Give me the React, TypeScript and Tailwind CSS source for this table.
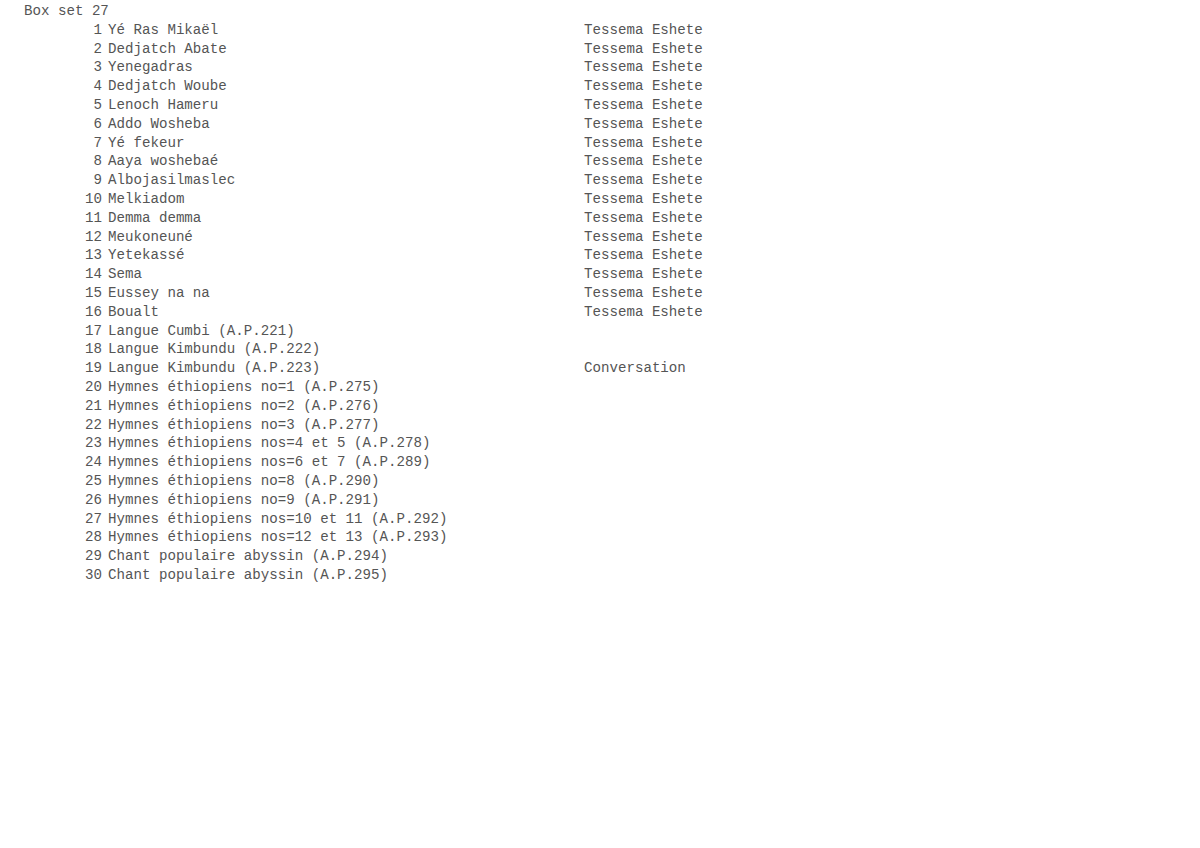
const tracks: [string, string][] = [
  ['Yé Ras Mikaël', 'Tessema Eshete'],
  ['Dedjatch Abate', 'Tessema Eshete'],
  ['Yenegadras', 'Tessema Eshete'],
  ['Dedjatch Woube', 'Tessema Eshete'],
  ['Lenoch Hameru', 'Tessema Eshete'],
  ['Addo Wosheba', 'Tessema Eshete'],
  ['Yé fekeur', 'Tessema Eshete'],
  ['Aaya woshebaé', 'Tessema Eshete'],
  ['Albojasilmaslec', 'Tessema Eshete'],
  ['Melkiadom', 'Tessema Eshete'],
  ['Demma demma', 'Tessema Eshete'],
  ['Meukoneuné', 'Tessema Eshete'],
  ['Yetekassé', 'Tessema Eshete'],
  ['Sema', 'Tessema Eshete'],
  ['Eussey na na', 'Tessema Eshete'],
  ['Boualt', 'Tessema Eshete'],
  ['Langue Cumbi (A.P.221)', ''],
  ['Langue Kimbundu (A.P.222)', ''],
  ['Langue Kimbundu (A.P.223)', 'Conversation'],
  ['Hymnes éthiopiens no=1 (A.P.275)', ''],
  ['Hymnes éthiopiens no=2 (A.P.276)', ''],
  ['Hymnes éthiopiens no=3 (A.P.277)', ''],
  ['Hymnes éthiopiens nos=4 et 5 (A.P.278)', ''],
  ['Hymnes éthiopiens nos=6 et 7 (A.P.289)', ''],
  ['Hymnes éthiopiens no=8 (A.P.290)', ''],
  ['Hymnes éthiopiens no=9 (A.P.291)', ''],
  ['Hymnes éthiopiens nos=10 et 11 (A.P.292)', ''],
  ['Hymnes éthiopiens nos=12 et 13 (A.P.293)', ''],
  ['Chant populaire abyssin (A.P.294)', ''],
  ['Chant populaire abyssin (A.P.295)', ''],
];

export default function App() {
  return (
    <div className="min-h-screen bg-white pl-[24px] pt-[2px] font-['Liberation_Mono',monospace] text-[14.15px] leading-[18.8px] text-[#555]">
      <div className="whitespace-pre">Box set 27</div>
      {tracks.map(([title, artist], i) => (
        <div key={i} className="flex whitespace-pre">
          <span className="w-[78px] shrink-0 text-right">{i + 1}</span>
          <span className="w-[482px] shrink-0 pl-[6px]">{title}</span>
          <span>{artist}</span>
        </div>
      ))}
    </div>
  );
}
